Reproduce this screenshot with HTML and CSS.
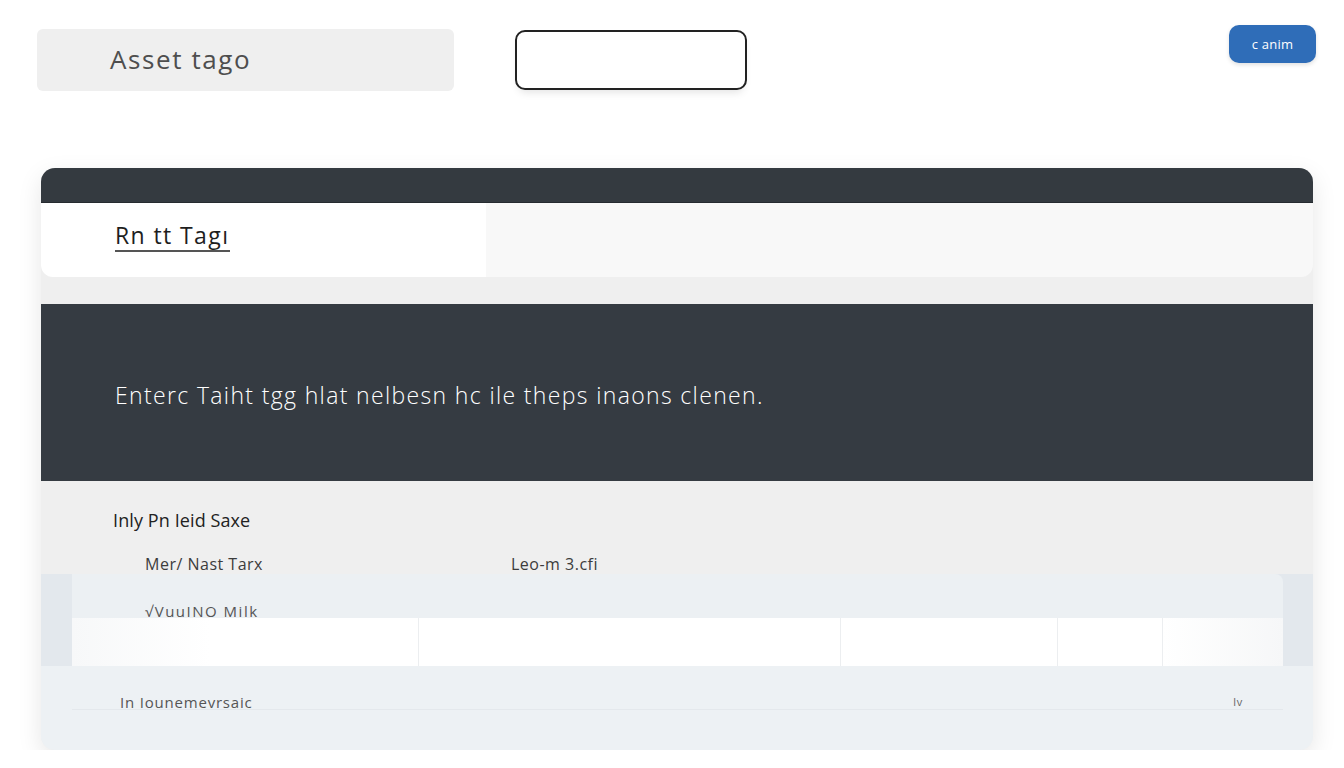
FILE: index.html
```html
<!DOCTYPE html>
<html lang="en">
<head>
<meta charset="utf-8">
<title>Asset tag</title>
<link rel="stylesheet" href="styles.css">
</head>
<body>
<header class="topbar">
  <div class="search">Asset tago</div>
  <div class="outline-box"></div>
  <button class="btn-primary">c anim</button>
</header>

<main class="card">
  <div class="card-head"></div>
  <div class="title-row">
    <div class="title-cell"><span class="title">Rn tt Tagı</span></div>
    <div class="title-rest"></div>
  </div>

  <section class="banner">
    <p class="banner-text">Enterc Taiht tgg hlat nelbesn hc ile theps inaons clenen.</p>
  </section>

  <section class="fields">
    <h2 class="fields-title">Inly Pn Ieid Saxe</h2>
    <div class="fields-labels">
      <span class="label-a">Mer/ Nast Tarx</span>
      <span class="label-b">Leo-m 3.cfi</span>
    </div>
  </section>

  <section class="table-wrap">
    <div class="table">
      <div class="table-head"><span class="check">√VuuINO Milk</span></div>
      <div class="table-row">
        <div class="cell c1"></div>
        <div class="cell c2"></div>
        <div class="cell c3"></div>
        <div class="cell c4"></div>
        <div class="cell c5"></div>
      </div>
    </div>
  </section>

  <section class="footer">
    <div class="footer-row">
      <span class="footer-left">In Iounemevrsaic</span>
      <span class="footer-right">lv</span>
    </div>
  </section>
</main>
</body>
</html>
```

FILE: styles.css
```css
* { box-sizing: border-box; }

html, body {
  margin: 0;
  padding: 0;
  background: #ffffff;
  font-family: "Open Sans", "Noto Sans", sans-serif;
}

.topbar {
  display: flex;
  align-items: flex-start;
  height: 168px;
  padding: 29px 28px 0 37px;
}

.search {
  width: 417px;
  height: 62px;
  background: #efefef;
  border-radius: 6px;
  padding-left: 73px;
  font-size: 26px;
  line-height: 60px;
  color: #4e4e4e;
  letter-spacing: 1.6px;
}

.outline-box {
  width: 232px;
  height: 60px;
  margin-top: 1px;
  margin-left: 61px;
  border: 2px solid #222;
  border-radius: 10px;
  background: #fff;
  box-shadow: 0 6px 8px -4px rgba(0, 0, 0, 0.12);
}

.btn-primary {
  margin-left: auto;
  margin-top: -4px;
  width: 87px;
  height: 38px;
  border: none;
  border-radius: 10px;
  background: #2f6db8;
  color: #fff;
  font-family: "Open Sans", sans-serif;
  font-size: 13px;
  font-weight: 500;
  letter-spacing: 0.2px;
  box-shadow: 0 2px 4px rgba(0, 0, 0, 0.12);
}

.card {
  margin: 0 31px 0 41px;
  height: 582px;
  background: #efefef;
  border-radius: 14px;
  box-shadow: 0 8px 24px rgba(0, 0, 0, 0.1);
  overflow: hidden;
  display: flex;
  flex-direction: column;
}

.card-head {
  height: 35px;
  background: #343a40;
  border-bottom: 1px solid #262b30;
}

.title-row {
  height: 74px;
  display: grid;
  grid-template-columns: 445px 1fr;
  border-radius: 0 0 12px 12px;
  overflow: hidden;
}

.title-cell {
  background: #ffffff;
  padding-left: 74px;
  padding-top: 17px;
}

.title-rest {
  background: #f8f8f8;
}

.title {
  position: relative;
  display: inline-block;
  font-size: 23px;
  line-height: 31px;
  font-weight: 500;
  color: #1e1e1e;
  letter-spacing: 1.4px;
}

.title::after {
  content: "";
  position: absolute;
  left: 0;
  bottom: -1px;
  width: 115px;
  height: 2px;
  background: #555;
}

.banner {
  margin-top: 27px;
  height: 177px;
  background: #353b42;
  display: flex;
  align-items: center;
  padding-left: 74px;
}

.banner-text {
  margin: 0;
  padding-top: 4px;
  color: #ffffff;
  font-size: 23px;
  font-weight: 300;
  letter-spacing: 1.35px;
}

.fields {
  height: 93px;
  padding-left: 72px;
  padding-top: 27px;
}

.fields-title {
  margin: 0;
  font-size: 18px;
  font-weight: 400;
  color: #222;
  letter-spacing: 0.1px;
  line-height: 24px;
}

.fields-labels {
  display: flex;
  margin-top: 21px;
  padding-left: 32px;
  font-size: 16px;
  line-height: 22px;
  color: #3c3c3c;
  letter-spacing: 0.5px;
}

.label-a { width: 366px; }

.table-wrap {
  height: 92px;
  background: #e3e8ed;
  padding: 0 30px 0 31px;
}

.table {
  height: 92px;
}

.table-head {
  height: 44px;
  background: #ecf0f3;
  border-radius: 0 8px 0 0;
  padding-left: 73px;
  padding-top: 27px;
  font-size: 15px;
  line-height: 20px;
  color: #555;
  letter-spacing: 1.5px;
}

.table-row {
  height: 48px;
  display: grid;
  grid-template-columns: 347px 422px 217px 105px 1fr;
  background: #ffffff;
}

.cell { border-right: 1px solid #eceef0; }
.cell:last-child { border-right: none; background: linear-gradient(90deg, #fff, #f6f7f8); }
.c1 { background: linear-gradient(90deg, #f7f8f9, #fff 40%); }

.footer {
  flex: 1;
  background: #edf1f4;
  padding: 0 30px 0 31px;
}

.footer-row {
  height: 44px;
  border-bottom: 1px solid #e4e8ec;
  display: flex;
  align-items: flex-end;
  justify-content: space-between;
  padding: 0 40px 0 48px;
  font-size: 15px;
  line-height: 14px;
  color: #555;
  letter-spacing: 0.8px;
}

.footer-right { font-size: 11px; color: #666; }
```
